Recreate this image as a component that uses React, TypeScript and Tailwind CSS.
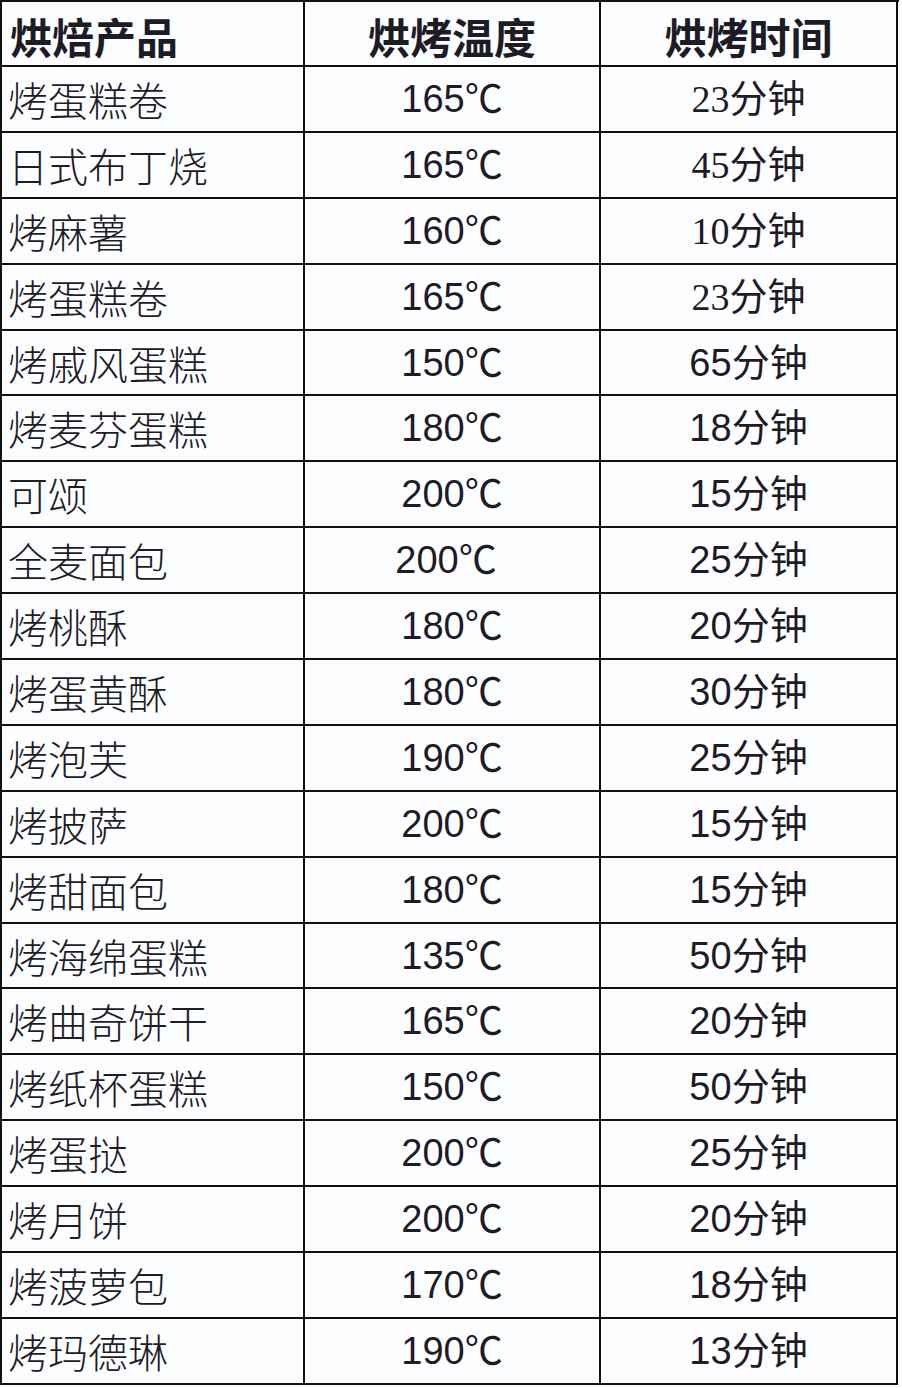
const ROWS: { name: string; temp: string; time: string; serif?: boolean; shift?: boolean }[] = [
  { name: "烤蛋糕卷", temp: "165℃", time: "23分钟", serif: true },
  { name: "日式布丁烧", temp: "165℃", time: "45分钟", serif: true },
  { name: "烤麻薯", temp: "160℃", time: "10分钟", serif: true },
  { name: "烤蛋糕卷", temp: "165℃", time: "23分钟", serif: true },
  { name: "烤戚风蛋糕", temp: "150℃", time: "65分钟" },
  { name: "烤麦芬蛋糕", temp: "180℃", time: "18分钟" },
  { name: "可颂", temp: "200℃", time: "15分钟" },
  { name: "全麦面包", temp: "200℃", time: "25分钟", shift: true },
  { name: "烤桃酥", temp: "180℃", time: "20分钟" },
  { name: "烤蛋黄酥", temp: "180℃", time: "30分钟" },
  { name: "烤泡芙", temp: "190℃", time: "25分钟" },
  { name: "烤披萨", temp: "200℃", time: "15分钟" },
  { name: "烤甜面包", temp: "180℃", time: "15分钟" },
  { name: "烤海绵蛋糕", temp: "135℃", time: "50分钟" },
  { name: "烤曲奇饼干", temp: "165℃", time: "20分钟" },
  { name: "烤纸杯蛋糕", temp: "150℃", time: "50分钟" },
  { name: "烤蛋挞", temp: "200℃", time: "25分钟" },
  { name: "烤月饼", temp: "200℃", time: "20分钟" },
  { name: "烤菠萝包", temp: "170℃", time: "18分钟" },
  { name: "烤玛德琳", temp: "190℃", time: "13分钟" },
];

const sans = "font-['Liberation_Sans','Noto_Sans_CJK_SC',sans-serif]";
const serif = "font-['Liberation_Serif','Noto_Sans_CJK_SC',serif]";

export default function App() {
  return (
    <div className="w-[902px] h-[1388px] bg-[#fcfdff] text-[#1c1b26]">
      <div className="w-[899px] border-t-2 border-l-2 border-[#111]">
        <div className="grid grid-cols-[303px_296px_297px] h-[65px] leading-none font-bold text-[42px] font-['Noto_Sans_CJK_SC',sans-serif]">
          <div className="border-r-2 border-b-2 border-[#111] flex items-center pl-2 pt-1">烘焙产品</div>
          <div className="border-r-2 border-b-2 border-[#111] flex items-center justify-center pt-1">烘烤温度</div>
          <div className="border-r-2 border-b-2 border-[#111] flex items-center justify-center pt-1">烘烤时间</div>
        </div>
        {ROWS.map((r, i) => (
          <div key={i} className={`grid grid-cols-[303px_296px_297px] h-[65.9px] leading-none text-[38px] ${sans}`}>
            <div className="border-r-2 border-b-2 border-[#111] flex items-center pl-1.5 text-[40px] font-['Noto_Sans_CJK_SC',sans-serif] font-light">
              {r.name}
            </div>
            <div className={`border-r-2 border-b-2 border-[#111] flex items-center justify-center ${r.shift ? "pr-3" : ""}`}>
              {r.temp}
            </div>
            <div className={`border-r-2 border-b-2 border-[#111] flex items-center justify-center ${r.serif ? serif : ""}`}>
              {r.time}
            </div>
          </div>
        ))}
      </div>
    </div>
  );
}
